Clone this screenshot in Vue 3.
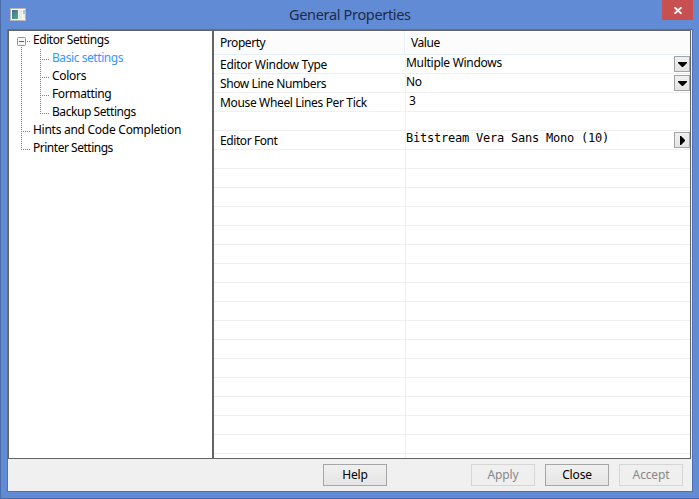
<script setup>
const tree = [
  { label: 'Editor Settings', level: 0, root: true, track: -0.43 },
  { label: 'Basic settings', level: 1, active: true, track: -0.43 },
  { label: 'Colors', level: 1, track: -0.3 },
  { label: 'Formatting', level: 1, track: -0.37 },
  { label: 'Backup Settings', level: 1, last: true, track: -0.43 },
  { label: 'Hints and Code Completion', level: 0, track: -0.27 },
  { label: 'Printer Settings', level: 0, last: true, track: -0.48 },
]
const rows = [
  { name: 'Editor Window Type', value: 'Multiple Windows', button: 'down', track: -0.28 },
  { name: 'Show Line Numbers', value: 'No', button: 'down', track: -0.4 },
  { name: 'Mouse Wheel Lines Per Tick', value: '3', indent: true, track: -0.35 },
  {},
  { name: 'Editor Font', value: 'Bitstream Vera Sans Mono (10)', mono: true, button: 'right', track: -0.42 },
  ...Array.from({ length: 17 }, () => ({})),
]
const buttons = [
  { label: 'Help', cls: 'help' },
  { label: 'Apply', cls: 'apply', disabled: true },
  { label: 'Close', cls: 'close-btn' },
  { label: 'Accept', cls: 'accept', disabled: true },
]
const tracking = (item) => (item.track ? { letterSpacing: item.track + 'px' } : null)
</script>

<template>
  <div class="window">
    <header class="titlebar">
      <svg class="app-icon" width="16" height="13" viewBox="0 0 16 13">
        <defs>
          <linearGradient id="pane" x1="0" y1="0" x2="1" y2="1">
            <stop offset="0" stop-color="#3f6f9c" />
            <stop offset="1" stop-color="#4fae78" />
          </linearGradient>
        </defs>
        <rect x=".5" y=".5" width="15" height="12" fill="#fafafa" stroke="#b9b7b3" />
        <rect x="2" y="2" width="6" height="9" fill="url(#pane)" />
        <rect x="9" y="2" width="3" height="9" fill="#e6e8e8" />
        <rect x="13" y="2" width="2" height="4" fill="#a5d3ba" />
        <rect x="13" y="6" width="2" height="5" fill="#e8eeea" />
      </svg>
      <h1 class="title">General Properties</h1>
      <button class="close" aria-label="Close">
        <svg width="8" height="7" viewBox="0 0 8 7"><path d="M.5 .2 7.5 6.8M7.5 .2.5 6.8" stroke="#fff" stroke-width="1.8" /></svg>
      </button>
    </header>
    <main class="client">
      <div class="panels">
        <ul class="tree">
          <li v-for="n in tree" :key="n.label" :class="{ active: n.active }">
            <svg width="24" height="18" viewBox="0 0 24 18">
              <template v-if="n.root">
                <path d="M12.5 16v2M18 10.5h4" class="dots" />
                <rect x="8.5" y="6.5" width="8" height="8" rx="1" fill="#f6f6f6" stroke="#919191" />
                <path d="M10 10.5h5" stroke="#4a5fa5" />
              </template>
              <path v-else-if="n.level" d="M12.5 0v18" class="dots" />
              <path v-else :d="n.last ? 'M12.5 0v11M14 10.5h8' : 'M12.5 0v18M14 10.5h8'" class="dots" />
            </svg>
            <svg v-if="n.level" width="19" height="18" viewBox="0 0 19 18">
              <path :d="n.last ? 'M7.5 0v11M9 10.5h8' : 'M7.5 0v18M9 10.5h8'" class="dots" />
            </svg>
            <span :style="tracking(n)">{{ n.label }}</span>
          </li>
        </ul>
        <section class="grid">
          <div class="head"><span class="h-name">Property</span><span class="h-value">Value</span></div>
          <div v-for="(r, i) in rows" :key="i" class="row">
            <div class="name" :style="tracking(r)">{{ r.name }}</div>
            <div class="value" :class="{ mono: r.mono, indent: r.indent }">{{ r.value }}</div>
            <button v-if="r.button" class="picker">
              <svg v-if="r.button === 'down'" width="9" height="5" viewBox="0 0 9 5"><path d="M0 0h9v1L5 5H4L0 1z" /></svg>
              <svg v-else width="5" height="9" viewBox="0 0 5 9"><path d="M0 0h1l4 4v1L1 9H0z" /></svg>
            </button>
          </div>
        </section>
      </div>
      <footer class="actions">
        <button v-for="b in buttons" :key="b.label" class="btn" :class="b.cls" :disabled="b.disabled">{{ b.label }}</button>
      </footer>
    </main>
  </div>
</template>

<style>
body { margin: 0; overflow: hidden; }
</style>

<style scoped>
* { box-sizing: border-box; }
.window {
  width: 699px; height: 499px; background: #618bd5;
  border-left: 1px solid #4b6cab; border-bottom: 1px solid #4668a6;
  padding: 0 6px 6px; font: 12px/18px "Noto Sans", "Open Sans", sans-serif; color: #000;
}
button { font: inherit; padding: 0; margin: 0; }
.titlebar { display: flex; height: 29px; padding-left: 3px; }
.app-icon { margin-top: 8px; flex: none; }
.title {
  width: 122px; margin: 4px 0 0 263px; font-size: 14.5px; line-height: 20px; font-weight: 400;
  color: #1d2c49; white-space: nowrap; letter-spacing: -.33px;
}
.close {
  width: 31px; height: 20px; margin-left: 251px; border: 0; background: #c75050;
  display: flex; align-items: center; justify-content: center; flex: none;
}
.client { width: 686px; height: 463px; border: 1px solid #4e71b3; background: #f0f0f0; }
.panels { display: flex; width: 683px; height: 429px; border: 1px solid #646464; background: #fff; }
.tree { width: 205px; flex: none; margin: 0; padding: 0; list-style: none; border-right: 2px solid #646464; }
.tree li { display: flex; height: 18px; white-space: nowrap; }
.tree svg { flex: none; }
.dots { stroke: #808080; stroke-width: 1; stroke-dasharray: 1 1; fill: none; }
.active { color: #3399ff; }
.grid { flex: 1; min-width: 0; overflow: hidden; }
.head { display: flex; height: 24px; background: #fcfcfc; border-bottom: 1px solid #e6effa; line-height: 23px; letter-spacing: -.45px; }
.h-name { width: 191px; padding-left: 6px; border-right: 1px solid #e6effa; }
.h-value { padding-left: 6px; }
.row { display: flex; height: 19px; border-bottom: 1px solid #f0f0f0; letter-spacing: -.28px; white-space: nowrap; }
.name { width: 192px; height: 19px; padding-left: 6px; border-right: 1px solid #f0f0f0; line-height: 20px; flex: none; }
.value { flex: 1; line-height: 16px; }
.indent { padding-left: 3px; }
.mono { font-family: "DejaVu Sans Mono", monospace; letter-spacing: -.225px; line-height: 14px; }
.picker {
  width: 16px; height: 16px; margin-top: 1px; border: 1px solid #a3a3a3; background: linear-gradient(#f0f0f0, #e4e4e4);
  display: flex; align-items: center; justify-content: center; flex: none;
}
.actions { display: flex; height: 32px; padding-top: 5px; }
.btn { height: 22px; width: 64px; border: 1px solid #a6a6a6; background: linear-gradient(#f0f0f0, #e5e5e5); color: #000; line-height: 20px; letter-spacing: -.15px; }
.btn:disabled { background: #efefef; border-color: #d6d6d6; color: #888; }
.help { margin-left: 315px; }
.apply { margin-left: 84px; }
.close-btn, .accept { margin-left: 10px; }
</style>
